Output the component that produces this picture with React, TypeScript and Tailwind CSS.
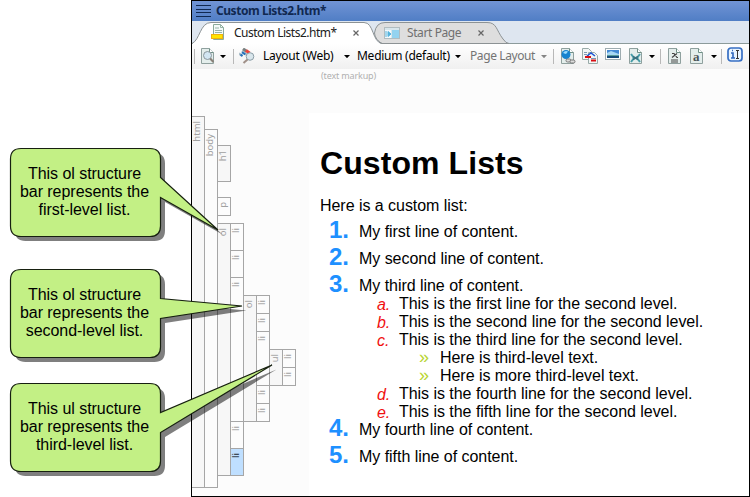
import type { ReactNode } from 'react';

const ui = "font-['Noto_Sans','Open_Sans',sans-serif]";

type BarProps = {
  label: string;
  size: string;
  tone?: string;
  offset?: string;
  edge?: string;
  children?: ReactNode;
};

function Bar({ label, size, tone = 'bg-[#fcfcfc] text-[#a0a0a0]', offset = '', edge = 'w-[14px] border', children }: BarProps) {
  return (
    <div className={`flex items-start ${offset}`}>
      <div className={`flex shrink-0 justify-center border-[#a6a6a6] pt-[4px] pr-[2px] ${edge} ${size} ${tone}`}>
        <span className="h-fit rotate-180 text-[9.5px] leading-[10px] [writing-mode:vertical-rl]">{label}</span>
      </div>
      {children && <div className="-ml-px flex flex-col">{children}</div>}
    </div>
  );
}

const shade = 'bg-[#f7f7f7] text-[#a0a0a0]';

function StructureBars() {
  return (
    <div className={`mt-[47px] ${ui}`}>
      <Bar label="html" size="h-[372px]" tone={shade} edge="w-[13px] border border-l-0">
        <Bar label="body" size="h-[359px]" offset="mt-[13px]">
          <Bar label="h1" size="h-[37px]" tone={shade} offset="mt-4" />
          <Bar label="p" size="h-[19px]" offset="mt-[15px]" />
          <Bar label="ol" size="h-[253px]" tone={shade} offset="mt-[7px]">
            <Bar label="li" size="h-7" />
            <Bar label="li" size="h-7" offset="-mt-px" />
            <div className="-mt-px h-[145px]">
              <Bar label="li" size="h-[145px]">
                <Bar label="ol" size="h-[127px]" tone={shade} offset="mt-[18px]">
                  <Bar label="li" size="h-[19px]" />
                  <Bar label="li" size="h-[19px]" offset="-mt-px" />
                  <Bar label="li" size="h-[55px]" offset="-mt-px">
                    <Bar label="ul" size="h-[37px]" tone={shade} offset="mt-[18px]">
                      <Bar label="li" size="h-[19px]" />
                      <Bar label="li" size="h-[19px]" offset="-mt-px" />
                    </Bar>
                  </Bar>
                  <Bar label="li" size="h-[19px]" offset="-mt-px" />
                  <Bar label="li" size="h-[19px]" offset="-mt-px" />
                </Bar>
              </Bar>
            </div>
            <Bar label="li" size="h-7" offset="-mt-px" />
            <Bar label="li" size="h-7" offset="-mt-px" tone="bg-[#bfdfff] text-[#202830]" />
          </Bar>
        </Bar>
      </Bar>
    </div>
  );
}

function Item({ mark, text, children, tall = true }: { mark: string; text: string; children?: ReactNode; tall?: boolean }) {
  return (
    <li>
      <div className={`flex ${tall ? 'h-[27px]' : 'h-[18px]'}`}>
        <span className="-mt-[5px] ml-[9px] w-[30px] shrink-0 text-[24px] leading-6 font-bold text-[#1e90ff]">{mark}</span>
        <span>{text}</span>
      </div>
      {children}
    </li>
  );
}

function SubItem({ mark, text }: { mark: string; text: string }) {
  return (
    <li className="flex h-[18px]">
      <span className="ml-[57px] w-[22px] shrink-0 pt-px text-[#f01010] italic">{mark}</span>
      <span>{text}</span>
    </li>
  );
}

function Bullet({ text }: { text: string }) {
  return (
    <li className="flex h-[18px]">
      <span className="-mt-px ml-[99px] w-[21px] shrink-0 text-[18px] text-[#b9d532]">»</span>
      <span>{text}</span>
    </li>
  );
}

function Document() {
  return (
    <div className="mt-11 flex-1 bg-white pl-[11px] text-[16px] leading-[18px] tracking-[-0.04px] whitespace-nowrap text-black">
      <h1 className="mt-8 h-[50px] text-[32px] leading-9 font-bold tracking-[0.08px]">Custom Lists</h1>
      <p className="mt-[2px] mb-2">Here is a custom list:</p>
      <ol>
        <Item mark="1." text="My first line of content." />
        <Item mark="2." text="My second line of content." />
        <Item mark="3." text="My third line of content." tall={false}>
          <ol>
            <SubItem mark="a." text="This is the first line for the second level." />
            <SubItem mark="b." text="This is the second line for the second level." />
            <SubItem mark="c." text="This is the third line for the second level." />
            <Bullet text="Here is third-level text." />
            <Bullet text="Here is more third-level text." />
            <SubItem mark="d." text="This is the fourth line for the second level." />
            <SubItem mark="e." text="This is the fifth line for the second level." />
          </ol>
        </Item>
        <Item mark="4." text="My fourth line of content." />
        <Item mark="5." text="My fifth line of content." />
      </ol>
    </div>
  );
}

function Sheet({ children, className = '' }: { children?: ReactNode; className?: string }) {
  return (
    <svg className={`h-4 w-[17px] shrink-0 ${className}`} viewBox="0 0 17 16">
      <path d="M.5.5h8l4 4v11H.5z" fill="#e4eeec" stroke="#8fa09e" />
      <path d="M8.5.5v4h4" fill="#fff" stroke="#6f9086" />
      {children}
    </svg>
  );
}

function Caret({ className = '' }: { className?: string }) {
  return (
    <svg className={`h-[3px] w-[6px] shrink-0 ${className}`} viewBox="0 0 6 3">
      <path d="M0 0h6L3 3.2z" fill="currentColor" />
    </svg>
  );
}

function Sep({ className = '' }: { className?: string }) {
  return <div className={`h-[15px] w-px shrink-0 bg-[#b8b8b8] ${className}`} />;
}

function Toolbar() {
  return (
    <div className={`flex h-[25px] items-center bg-gradient-to-b from-white to-[#f0f0f0] pb-px text-[12px] whitespace-nowrap text-black ${ui}`}>
      <Sep className="ml-[2px]" />
      <Sheet className="ml-[6px]">
        <circle cx="6.5" cy="7.5" r="4" fill="#d2e6f2" stroke="#8a969c" />
        <path d="M9.2 10.5l3.2 3.5" stroke="#8a8078" strokeWidth="2" />
      </Sheet>
      <Caret className="ml-[2px]" />
      <Sep className="ml-[7px]" />
      <svg className="ml-[5px] h-4 w-[17px] shrink-0" viewBox="0 0 17 16">
        <path d="M0 5.5L3.5 8M3 3l5 4" stroke="#a8bcc8" strokeWidth="2.4" />
        <path d="M4 .8L7.5 3.3" stroke="#7a8080" strokeWidth="3" />
        <path d="M7 2.5L10.5 5" stroke="#f04038" strokeWidth="3" />
        <path d="M3 4.2l3.2 2.2M1.5 6.5l2 1.5" stroke="#2372bc" strokeWidth="2" />
        <circle cx="11" cy="8.5" r="3.8" fill="#d9e6ec" stroke="#8b9da6" />
        <path d="M8.5 11.5l-4 3.5" stroke="#a09088" strokeWidth="2" />
      </svg>
      <span className="ml-[7px] w-[81px] tracking-[-0.26px]">Layout (Web)</span>
      <Caret />
      <span className="ml-[7px] w-[98px] tracking-[-0.26px]">Medium (default)</span>
      <Caret />
      <span className="ml-[9px] w-[71px] tracking-[-0.4px] text-[#747474]">Page Layout</span>
      <Caret className="text-[#858585]" />
      <Sep className="ml-[6px]" />
      <Sheet className="ml-[7px]">
        <circle cx="5" cy="6.5" r="4.5" fill="#1683cf" />
        <path d="M2 5q2-3 5-1.5L5 6z" fill="#9bdcff" />
        <rect x="5" y="11" width="5" height="3" rx="1.5" fill="#ddd" stroke="#777" />
        <rect x="9" y="12" width="5" height="3" rx="1.5" fill="#ddd" stroke="#777" />
      </Sheet>
      <svg className="ml-[4px] h-4 w-[17px] shrink-0" viewBox="0 0 17 16">
        <path d="M.5.5h6l3 3v8h-9z" fill="#f2f6f5" stroke="#99aaa8" />
        <path d="M6.500 4.500h6l3 3v8h-9z" fill="#f2f6f5" stroke="#99aaa8" />
        <path d="M2 4.500h3M2 6.500h3M9 10.500h5" stroke="#8098b0" />
        <path d="M5 8l4-3 4 3" fill="none" stroke="#1d55d5" strokeWidth="1.500" />
        <path d="M3 9h6M9 12.500h5" stroke="#d90d12" strokeWidth="2" />
      </svg>
      <svg className="ml-[6px] h-4 w-[17px] shrink-0 -translate-y-px" viewBox="0 0 17 16">
        <rect x=".5" y="1.500" width="15" height="11" fill="#fff" stroke="#9eacb0" />
        <rect x="2" y="3" width="12" height="5" fill="#4389d5" />
        <path d="M2 8V6l4-2 8 3v1z" fill="#a8d8f5" />
        <path d="M2 8h12v3H2z" fill="#164b78" />
        <path d="M2 8.500h12" stroke="#5b9d9b" />
      </svg>
      <Sheet className="ml-[7px]">
        <path d="M2 6l3 4-3 4M11 6l-3 4 3 4" fill="none" stroke="#469ca8" strokeWidth="2" />
        <path d="M4 8.500l5 3M9 8.500l-5 3" stroke="#39737f" strokeWidth="1.500" />
      </Sheet>
      <Caret className="ml-[3px]" />
      <Sep className="ml-[5px]" />
      <Sheet className="ml-[7px]">
        <path d="M4 5.500h2l3 4h1M9 5.500L4 9.500M3 12h7M3 14h7" fill="none" stroke="#444" strokeWidth="1.200" />
      </Sheet>
      <Sheet className="ml-[5px]">
        <text x="3" y="12.500" className="font-['Liberation_Serif',serif] text-[13px] font-bold" fill="#4b5558">a</text>
      </Sheet>
      <Caret className="ml-[4px]" />
      <Sep className="ml-[4px]" />
      <svg className="ml-[5px] h-4 w-[17px] shrink-0 -translate-y-px" viewBox="0 0 17 16">
        <rect x="1" y="1" width="14" height="13" rx="3" fill="#e9f4ff" stroke="#376fc4" strokeWidth="1.700" />
        <path d="M4 6h2v5M4 11h4M5 3.500h1" fill="none" stroke="#2e66bd" strokeWidth="1.600" />
        <path d="M9 3.500h3M9 11.500h3M10.500 3.500v8" stroke="#333" />
      </svg>
    </div>
  );
}

function Cross() {
  return (
    <svg className="relative h-[6px] w-[6px] shrink-0" viewBox="0 0 6 6">
      <path d="M.5.5l5 5M5.500.5l-5 5" stroke="#666" strokeWidth="1.200" />
    </svg>
  );
}

function Tabs() {
  return (
    <div className={`relative flex h-[23px] items-center bg-[#dee6f0] text-[12px] whitespace-nowrap ${ui}`}>
      <svg className="absolute inset-0 h-[23px] w-full" viewBox="192 21 557 23" preserveAspectRatio="none">
        <path d="M192 43.500H749" stroke="#8c9b9b" />
        <path d="M382 43.500C376 40 375 36 374.500 33Q376 22.500 385 22.500H487C497 22.500 496 30 503 39Q506 43.500 509 43.500Z" fill="#dedede" stroke="#8c9294" />
        <path d="M192 44C200 40 200 22.500 211 22.500H364C374 22.500 372 42 382 44Z" fill="#fff" />
        <path d="M192 43.500C200 40 200 22.500 211 22.500H364C374 22.500 372 42 382 43.500" fill="none" stroke="#8c9294" />
      </svg>
      <svg className="relative ml-[19px] h-[17px] w-4 shrink-0" viewBox="0 0 16 17">
        <path d="M2.500.5h7l3 3v12h-10z" fill="#f4faf8" stroke="#8bab9a" />
        <path d="M9.500.5v3h3M4 4h4M4 6.500h7M4 8.500h7" fill="none" stroke="#98b4a8" />
        <rect x=".5" y="10.500" width="11" height="4" fill="#ffe500" stroke="#eeb211" />
      </svg>
      <span className="relative ml-[7px] w-[119px] pt-px tracking-[-0.5px] text-[#202020]">Custom Lists2.htm*</span>
      <Cross />
      <svg className="relative ml-[25px] h-3 w-4 shrink-0" viewBox="0 0 16 12">
        <rect x=".5" y=".5" width="15" height="11" fill="#d8e6ec" stroke="#b0bcc0" />
        <rect x="8" y="3" width="7" height="8" fill="#94d3f0" />
        <path d="M1 3h6v8H1z" fill="#f3f9fc" />
        <path d="M2 4v6M4 4.500v5L7 7z" fill="#55b3dc" stroke="#55b3dc" />
      </svg>
      <span className="relative ml-[7px] w-[71px] pt-px tracking-[-0.4px] text-[#707070]">Start Page</span>
      <Cross />
    </div>
  );
}

type CalloutProps = { lines: string[]; place: string; tipX: number; tipY: number };

function Callout({ lines, place, tipX, tipY }: CalloutProps) {
  const outline = `M11 .5H140Q150.500 .5 150.500 11V29.500L${tipX} ${tipY}L150.500 49.500V78Q150.500 88.500 140 88.500H11Q.5 88.500 .5 78V11Q.5 .5 11 .5Z`;
  return (
    <div className={`absolute left-[10px] h-[89px] w-[151px] ${place}`}>
      <svg className="absolute inset-0 overflow-visible" width="151" height="89">
        <path d={outline} fill="#000" fillOpacity=".5" transform="translate(4.500 4.500)" />
        <path d={outline} fill="#c3f085" stroke="#172010" strokeWidth="1.200" />
      </svg>
      <div className="relative pt-[17px] pr-[2px] text-center text-[16px] leading-[18px] tracking-[-0.04px] whitespace-nowrap text-black">
        {lines.map((line) => <div key={line}>{line}</div>)}
      </div>
    </div>
  );
}

export default function App() {
  return (
    <main className="relative h-[497px] w-[750px] overflow-hidden bg-white font-['Liberation_Sans',Arial,sans-serif]">
      <section className="ml-[191px] flex h-[497px] w-[559px] flex-col border border-black bg-[#fcfcfc]">
        <header className={`flex h-5 shrink-0 items-center bg-gradient-to-b from-[#7194d5] to-[#507ec5] text-[12px] font-bold text-[#102850] ${ui}`}>
          <svg className="ml-1 h-3 w-[15px]" viewBox="0 0 15 12" shapeRendering="crispEdges">
            <path d="M0 .5h15M0 4.500h15M0 7.500h15M0 11.500h15" stroke="#102850" />
          </svg>
          <span className="ml-[5px] tracking-[-0.45px] whitespace-nowrap">Custom Lists2.htm*</span>
        </header>
        <Tabs />
        <Toolbar />
        <div className="flex min-h-0 flex-1">
          <div className="w-[117px] shrink-0"><StructureBars /></div>
          <div className="flex flex-1 flex-col">
            <span className={`-mb-[12px] ml-[12px] h-3 text-[9px] leading-[13px] tracking-[-0.15px] text-[#b0b0b0] ${ui}`}>(text markup)</span>
            <Document />
          </div>
        </div>
      </section>
      <Callout place="top-[148px]" lines={['This ol structure', 'bar represents the', 'first-level list.']} tipX={208} tipY={82} />
      <Callout place="top-[269px]" lines={['This ol structure', 'bar represents the', 'second-level list.']} tipX={232} tipY={37} />
      <Callout place="top-[383px]" lines={['This ul structure', 'bar represents the', 'third-level list.']} tipX={262} tipY={-18} />
    </main>
  );
}
